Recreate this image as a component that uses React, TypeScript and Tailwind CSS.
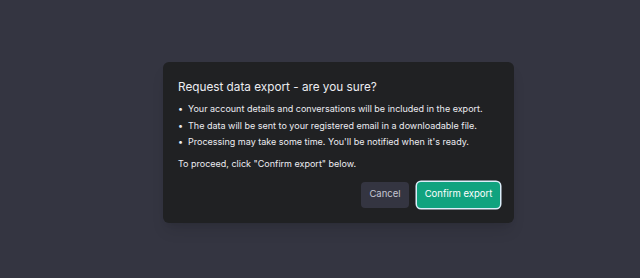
export default function App() {
  const items = [
    'Your account details and conversations will be included in the export.',
    'The data will be sent to your registered email in a downloadable file.',
    "Processing may take some time. You'll be notified when it's ready.",
  ]

  return (
    <div
      className="w-[640px] h-[278px] bg-[#343541] pl-[163px] pt-[62px]"
      style={{ fontFamily: 'Inter, "Noto Sans", sans-serif' }}
    >
      <div className="w-[351px] h-[161px] bg-[#202123] rounded-md shadow-lg pl-[15px] pr-[14px] pt-[15px]">
        <h2 className="text-[11.75px] leading-5 text-[#ececf1]">
          Request data export - are you sure?
        </h2>

        <ul className="mt-[4px]">
          {items.map((item) => (
            <li
              key={item}
              className="flex items-start text-[9px] leading-[16.5px] text-[#ececf1]"
            >
              <span className="w-[10px] shrink-0">•</span>
              <span>{item}</span>
            </li>
          ))}
        </ul>

        <p className="mt-[5px] text-[9px] leading-[16px] text-[#ececf1]">
          To proceed, click "Confirm export" below.
        </p>

        <div className="mt-[10px] flex justify-end gap-[8px]">
          <button className="h-[26px] w-[48px] rounded-[4px] bg-[#343541] text-[9.5px] text-[#c5c5d2]">
            Cancel
          </button>
          <button className="h-[26px] w-[83px] rounded-[4px] bg-[#10a37f] text-[9.5px] text-white ring-[1.5px] ring-[#dbeefa]">
            Confirm export
          </button>
        </div>
      </div>
    </div>
  )
}
